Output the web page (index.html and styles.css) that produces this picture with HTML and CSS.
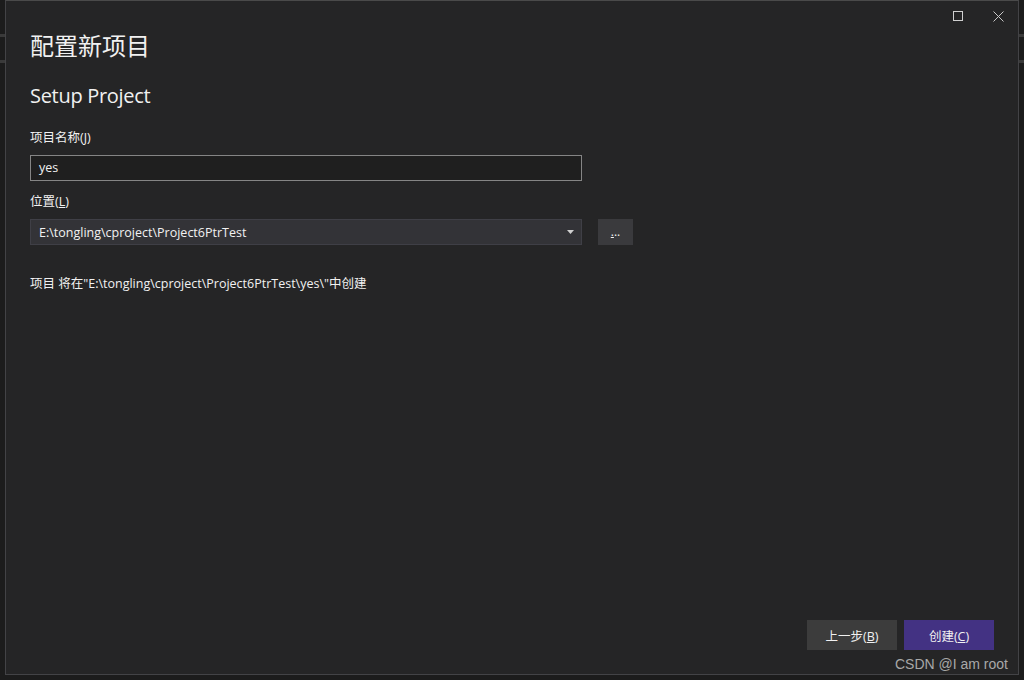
FILE: index.html
```html
<!DOCTYPE html>
<html lang="zh">
<head>
<meta charset="utf-8">
<link rel="stylesheet" href="styles.css">
</head>
<body>
<div class="dialog">
  <div class="titlebar">
    <button class="win-btn" aria-label="最大化">
      <svg width="10" height="10" viewBox="0 0 10 10"><rect x="0.5" y="0.5" width="9" height="9" fill="none" stroke="#d0d0d0" stroke-width="1"/></svg>
    </button>
    <button class="win-btn" aria-label="关闭">
      <svg width="11" height="11" viewBox="0 0 11 11"><path d="M0.5 0.5 L10.5 10.5 M10.5 0.5 L0.5 10.5" stroke="#c8c8c8" stroke-width="1"/></svg>
    </button>
  </div>
  <div class="content">
    <h1 class="title">配置新项目</h1>
    <h2 class="subtitle">Setup Project</h2>
    <label class="label">项目名称(<u>J</u>)</label>
    <div class="input">yes</div>
    <label class="label">位置(<u>L</u>)</label>
    <div class="loc-row">
      <div class="combo">
        <span>E:\tongling\cproject\Project6PtrTest</span>
        <svg class="arrow" width="7" height="4" viewBox="0 0 7 4"><path d="M0 0 H7 L3.5 4 Z" fill="#d0d0d0"/></svg>
      </div>
      <button class="browse"><u>.</u>..</button>
    </div>
    <p class="info">项目 将在"E:\tongling\cproject\Project6PtrTest\yes\"中创建</p>
  </div>
  <div class="footer">
    <button class="btn btn-back">上一步(<u>B</u>)</button>
    <button class="btn btn-create">创建(<u>C</u>)</button>
  </div>
  <div class="watermark">CSDN @I am root</div>
</div>
</body>
</html>
```

FILE: styles.css
```css
html, body {
  margin: 0;
  padding: 0;
}
body {
  width: 1024px;
  height: 680px;
  overflow: hidden;
  background-color: #1c1c1c;
  background-image:
    linear-gradient(to bottom, transparent 34px, #3a3a3a 34px, #3a3a3a 37px, transparent 37px, transparent 60px, #3a3a3a 60px, #3a3a3a 63px, transparent 63px);
  font-family: "Open Sans", "Noto Sans CJK SC", sans-serif;
  color: #f1f1f1;
}
.dialog {
  position: relative;
  margin-left: 5px;
  width: 1012px;
  height: 673px;
  background: #252526;
  border: 1px solid #434346;
  border-top-color: #4a4a4a;
  display: flex;
  flex-direction: column;
}
.titlebar {
  display: flex;
  justify-content: flex-end;
  gap: 18px;
  padding: 9px 9px 0 0;
  height: 20px;
}
.win-btn {
  background: none;
  border: 0;
  padding: 0;
  width: 22px;
  height: 12px;
  display: flex;
  align-items: center;
  justify-content: center;
}
.content {
  flex: 1;
  padding: 0 0 0 24px;
  font-size: 12.5px;
}
.title {
  margin: -2px 0 0;
  font-family: "Noto Sans CJK SC", sans-serif;
  font-weight: 400;
  font-size: 24px;
  line-height: 34px;
  color: #f1f1f1;
}
.subtitle {
  margin: 20px 0 0;
  font-family: "Open Sans", "Noto Sans CJK SC", sans-serif;
  font-weight: 400;
  font-size: 20px;
  line-height: 28px;
  color: #f1f1f1;
  letter-spacing: -0.3px;
}
.label {
  display: block;
  font-size: 12.5px;
  line-height: 17px;
  color: #f1f1f1;
}
.subtitle + .label {
  margin-top: 19px;
}
.input {
  margin-top: 9px;
  box-sizing: border-box;
  width: 552px;
  height: 26px;
  border: 1px solid #858585;
  background: #1f1f1f;
  padding: 0 8px;
  line-height: 24px;
  color: #f1f1f1;
}
.input + .label {
  margin-top: 12px;
}
.loc-row {
  margin-top: 9px;
  display: flex;
  gap: 16px;
}
.combo {
  box-sizing: border-box;
  width: 552px;
  height: 26px;
  background: #333337;
  border: 1px solid #3f3f46;
  padding: 0 8px;
  display: flex;
  align-items: center;
  justify-content: space-between;
  color: #f1f1f1;
}
.arrow {
  margin-right: -1px;
}
.browse {
  box-sizing: border-box;
  width: 35px;
  height: 26px;
  background: #3a3a3d;
  border: 0;
  color: #f1f1f1;
  font-family: "Open Sans", sans-serif;
  font-size: 12px;
  line-height: 26px;
  padding: 0;
}
.info {
  margin: 30px 0 0;
  line-height: 17px;
  color: #f1f1f1;
}
.footer {
  display: flex;
  justify-content: flex-end;
  gap: 7px;
  padding: 0 24px 24px 0;
}
.btn {
  width: 90px;
  height: 30px;
  border: 0;
  font-family: "Open Sans", "Noto Sans CJK SC", sans-serif;
  font-size: 12.5px;
  color: #f1f1f1;
  padding: 0;
}
.btn-back {
  background: #3c3c3c;
}
.btn-create {
  background: #433283;
}
.watermark {
  position: absolute;
  right: 10px;
  bottom: 2px;
  font-family: "Liberation Sans", sans-serif;
  font-size: 14px;
  color: #a8a8a8;
}
```
